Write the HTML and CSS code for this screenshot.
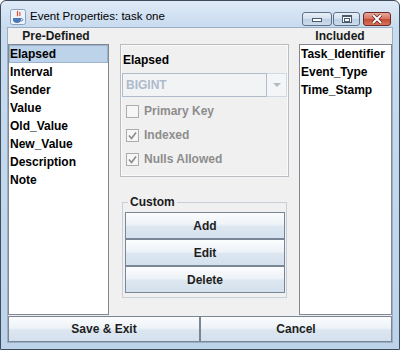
FILE: index.html
```html
<!DOCTYPE html>
<html lang="en">
    <head>
        <meta charset="UTF-8">
        <meta name="viewport" content="width=device-width, initial-scale=1.0">
        <title>Event Properties</title>
        <link rel="stylesheet" href="styles.css">
    </head>
<body>

    <div class="window">
        <div class="titlebar">
            <svg class="app-icon" width="16" height="16" viewBox="0 0 16 16">
                <rect x="0.5" y="0.5" width="15" height="15" rx="2" fill="#eef3fa" stroke="#8aa2c0"/>
                <path d="M8 2 C6 4 9 5 7 7 M10 3 C9 5 11 5 9.5 7" stroke="#e0502a" stroke-width="1.2" fill="none"/>
                <path d="M3 9 H11 V11 C11 13 9 14 7 14 C5 14 3 13 3 11 Z" fill="#4a78b8"/>
                <path d="M11 9.5 C13.5 9.5 13.5 12 11 12" stroke="#4a78b8" stroke-width="1" fill="none"/>
            </svg>
            <span class="title">Event Properties: task one</span>
            <div class="caption-buttons">
                <div class="cap-btn cap-min"><span class="min-glyph"></span></div>
                <div class="cap-btn cap-max"><span class="max-glyph"></span></div>
                <div class="cap-btn cap-close">
                    <svg width="12" height="10" viewBox="0 0 12 10">
                        <path d="M2 1 L10 9 M10 1 L2 9" stroke="#5a2020" stroke-width="3.4"/>
                        <path d="M2 1 L10 9 M10 1 L2 9" stroke="#ffffff" stroke-width="2"/>
                    </svg>
                </div>
            </div>
        </div>

        <div class="client">
            <div class="columns">
                <div class="col col-left">
                    <div class="col-title title-left">Pre-Defined</div>
                    <ul class="list">
                        <li class="selected">Elapsed</li>
                        <li>Interval</li>
                        <li>Sender</li>
                        <li>Value</li>
                        <li>Old_Value</li>
                        <li>New_Value</li>
                        <li>Description</li>
                        <li>Note</li>
                    </ul>
                </div>

                <div class="col col-mid">
                    <div class="props">
                        <div class="prop-name">Elapsed</div>
                        <div class="combo">
                            <div class="combo-field">BIGINT</div>
                            <div class="combo-arrow"><span class="tri"></span></div>
                        </div>
                        <div class="check-row">
                            <span class="check-box"></span>
                            <span>Primary Key</span>
                        </div>
                        <div class="check-row">
                            <span class="check-box">
                                <svg width="11" height="11" viewBox="0 0 11 11"><path d="M2 5.5 L4.5 8.5 L9 2.5" stroke="#8a8a8a" stroke-width="1.6" fill="none"/></svg>
                            </span>
                            <span>Indexed</span>
                        </div>
                        <div class="check-row">
                            <span class="check-box">
                                <svg width="11" height="11" viewBox="0 0 11 11"><path d="M2 5.5 L4.5 8.5 L9 2.5" stroke="#8a8a8a" stroke-width="1.6" fill="none"/></svg>
                            </span>
                            <span>Nulls Allowed</span>
                        </div>
                    </div>

                    <fieldset class="custom">
                        <legend>Custom</legend>
                        <button class="btn">Add</button>
                        <button class="btn">Edit</button>
                        <button class="btn">Delete</button>
                    </fieldset>
                </div>

                <div class="col col-right">
                    <div class="col-title title-right">Included</div>
                    <ul class="list">
                        <li>Task_Identifier</li>
                        <li>Event_Type</li>
                        <li>Time_Stamp</li>
                    </ul>
                </div>
            </div>

            <div class="footer">
                <button class="btn">Save &amp; Exit</button>
                <button class="btn">Cancel</button>
            </div>
        </div>
    </div>

</body>
</html>
```

FILE: styles.css
```css
* {
    box-sizing: border-box;
}
body {
    margin: 0;
    font-family: "Liberation Sans", Arial, sans-serif;
}
.window {
    width: 400px;
    height: 350px;
    border: 1px solid #3e4d5e;
    border-radius: 6px 6px 0 0;
    background: linear-gradient(#dfeaf6, #c8dbef 26px, #bdd3ea);
    padding: 0 6px 6px;
    display: flex;
    flex-direction: column;
}
.titlebar {
    height: 26px;
    display: flex;
    align-items: flex-start;
}
.app-icon {
    margin: 8px 4px 0 3px;
}
.title {
    font-size: 11.5px;
    color: #000;
    margin-top: 9px;
}
.caption-buttons {
    margin: 11px 2px 0 auto;
    display: flex;
}
.cap-btn {
    height: 14px;
    border: 1px solid #5f7189;
    border-radius: 3px;
    background: linear-gradient(#e9f0f8, #d2dfed 50%, #bccfe4 51%, #cddcec);
    display: flex;
    align-items: center;
    justify-content: center;
}
.cap-min {
    width: 30px;
    margin-right: 1px;
    align-items: flex-end;
    padding-bottom: 3px;
}
.cap-max {
    width: 27px;
    margin-right: 3px;
}
.cap-close {
    width: 28px;
    border-color: #6b2a24;
    background: linear-gradient(#e9a99a, #d8705d 50%, #c44a34 51%, #d6735a);
}
.min-glyph {
    width: 10px;
    height: 4px;
    background: #fff;
    border: 1px solid #4a5a70;
}
.max-glyph {
    width: 10px;
    height: 8px;
    border: 1px solid #4a5a70;
    border-top-width: 2px;
    background: #fff;
    box-shadow: inset 0 0 0 1px #fff;
}
.max-glyph::after {
    content: "";
    display: block;
    margin: 1px;
    height: 2px;
    border: 1px solid #4a5a70;
}
.client {
    flex: 1;
    border: 1px solid #9aafc6;
    background: #f0f0f0;
    display: flex;
    flex-direction: column;
    font-size: 12px;
    font-weight: bold;
    color: #000;
}
.columns {
    flex: 1;
    display: flex;
}
.col {
    display: flex;
    flex-direction: column;
}
.col-left {
    width: 101px;
}
.col-mid {
    width: 190px;
}
.col-right {
    width: 93px;
}
.col-title {
    height: 16px;
    line-height: 16px;
    text-align: center;
    color: #1a1a1a;
}
.title-left {
    padding-right: 5px;
}
.title-right {
    padding-right: 11px;
}
.list {
    flex: 1;
    margin: 0 0 1px;
    padding: 0;
    list-style: none;
    background: #fff;
    border: 1px solid #828790;
}
.list li {
    height: 18px;
    line-height: 17px;
    padding-left: 0;
    border: 1px solid transparent;
    white-space: nowrap;
}
.list li.selected {
    background: #bdd3ea;
    border-color: #9ab4d0;
}
.props {
    margin: 16px 10px 0 11px;
    height: 133px;
    border: 1px solid #b9bdc2;
    box-shadow: inset 0 0 0 1px #fafafa;
    padding: 7px 1px 0;
}
.prop-name {
    height: 16px;
    line-height: 16px;
    padding-left: 1px;
    margin-bottom: 5px;
}
.combo {
    display: flex;
    height: 24px;
    margin-bottom: 2px;
}
.combo-field {
    flex: 1;
    border: 1px solid #aebccc;
    background: #f2f3f5;
    color: #aebbcc;
    line-height: 22px;
    padding-left: 3px;
}
.combo-arrow {
    width: 20px;
    border: 1px solid #d3d9e0;
    border-left: none;
    background: #f4f5f7;
    display: flex;
    align-items: center;
    justify-content: center;
}
.tri {
    width: 0;
    height: 0;
    border-left: 4px solid transparent;
    border-right: 4px solid transparent;
    border-top: 4px solid #b3bac4;
}
.check-row {
    height: 24px;
    display: flex;
    align-items: center;
    gap: 5px;
    padding-left: 4px;
    color: #8d8d8d;
}
.check-box {
    width: 13px;
    height: 13px;
    border: 1px solid #adadad;
    background: #f6f6f6;
    display: flex;
    align-items: center;
    justify-content: center;
}
.custom {
    margin: 18px 12px 0 13px;
    padding: 3px 2px 4px;
    border: 1px solid #c7d0d9;
    min-width: 0;
}
.custom legend {
    padding: 0 2px;
    margin-left: 3px;
    line-height: 14px;
    color: #1a1a1a;
}
.btn {
    display: block;
    height: 27px;
    font-family: "Liberation Sans", Arial, sans-serif;
    font-size: 12px;
    font-weight: bold;
    color: #1e1e1e;
    border: 1px solid #7a8696;
    background: linear-gradient(#fbfcfd, #eef3f8 45%, #dce6f0 55%, #d4e1ee);
    padding: 0;
}
.custom .btn {
    width: 160px;
}
.footer {
    height: 26px;
    display: flex;
}
.footer .btn {
    flex: 1;
    height: 26px;
}
```
